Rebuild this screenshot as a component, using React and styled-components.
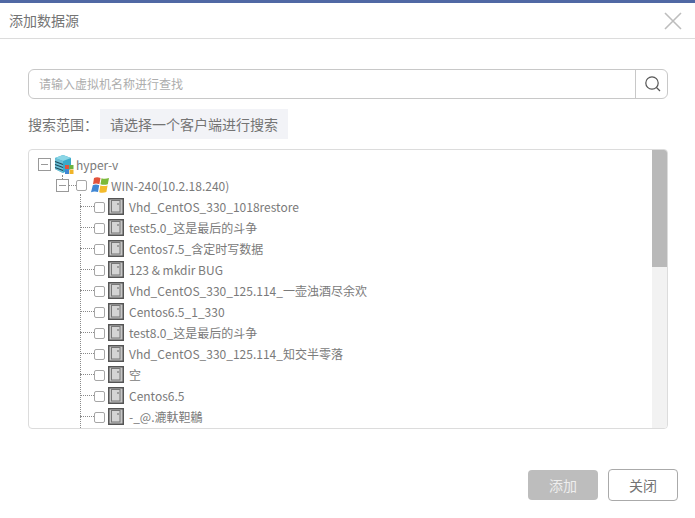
import React from "react";
import styled, { createGlobalStyle } from "styled-components";

const Global = createGlobalStyle`
  html, body { margin: 0; padding: 0; background: #fff; }
  body { font-family: "Noto Sans CJK SC", "Noto Sans", sans-serif; color: #666; }
  * { box-sizing: border-box; }
`;
const Dialog = styled.div`
  width: 695px; height: 518px; border-top: 3px solid #5068a4; background: #fff;
  display: flex; flex-direction: column; overflow: hidden;
`;
const Header = styled.header`
  height: 36px; flex: none; border-bottom: 1px solid #dcdcdc;
  display: flex; align-items: center; justify-content: space-between; padding: 0 13px 2px 9px;
`;
const Title = styled.h1`
  margin: 0; font-size: 14px; font-weight: 400; color: #747474; line-height: 20px;
  font-family: "Noto Sans CJK SC", sans-serif;
`;
const CloseBtn = styled.button`
  width: 18px; height: 18px; padding: 0; border: 0; background: none; display: block; margin-top: 2px;
`;
const Body = styled.main`
  flex: 1; padding: 30px 27px 0 28px; display: flex; flex-direction: column;
`;
const SearchBox = styled.div`
  height: 30px; border: 1px solid #c8c8c8; border-radius: 6px; display: flex; align-items: stretch;
`;
const SearchInput = styled.input`
  flex: 1; min-width: 0; border: 0; outline: 0; background: none; padding: 0 10px 2px;
  font: 12px "Noto Sans CJK SC", sans-serif; color: #666;
  &::placeholder { color: #adadad; opacity: 1; }
`;
const SearchBtn = styled.button`
  width: 32px; flex: none; border: 0; border-left: 1px solid #c8c8c8; background: none; padding: 0 0 0 2px;
  display: flex; align-items: center; justify-content: center;
`;
const ScopeRow = styled.div`
  display: flex; align-items: center; height: 30px; margin-top: 10px;
`;
const ScopeLabel = styled.span`
  width: 72px; font: 14px/20px "Noto Sans CJK SC", sans-serif; color: #747474;
`;
const ScopeChip = styled.span`
  height: 30px; width: 188px; background: #f2f3f7; color: #747474; text-align: center;
  font: 14px/30px "Noto Sans CJK SC", sans-serif;
`;
const TreePanel = styled.section`
  height: 280px; margin-top: 10px; border: 1px solid #dcdcdc; border-radius: 4px;
  display: flex; overflow: hidden;
`;
const Tree = styled.div`
  flex: 1; min-width: 0; padding: 4px 0 0 9px; position: relative; overflow: hidden;
`;
const Row = styled.div`
  height: 21px; display: flex; align-items: center; padding-left: ${p => p.$indent}px;
`;
const Expander = styled.span`
  width: 13px; height: 13px; flex: none; border: 1px solid #999; background: #fff; position: relative;
  &::after { content: ""; position: absolute; left: 2px; right: 2px; top: 5px; height: 1px; background: #999; }
`;
const Check = styled.span`
  width: 11px; height: 11px; flex: none; border: 1px solid #a6a6a6; border-radius: 2px; background: #fff;
  margin-top: ${p => p.$nudge ? 2 : 0}px;
`;
const HDots = styled.span`
  width: ${p => p.$w}px; height: 1px; flex: none; border-top: 1px dotted #8a8a8a;
`;
const VLine = styled.span`
  position: absolute; width: 1px; border-left: 1px dotted #8a8a8a;
  left: ${p => p.$left}px; top: ${p => p.$top}px; height: ${p => p.$h}px;
`;
const Label = styled.span`
  font-size: 12px; line-height: 21px; color: #7a7a7a; white-space: nowrap; margin-left: ${p => p.$ml}px;
  font-family: "Noto Sans CJK SC", "Noto Sans", sans-serif;
`;
const IconSlot = styled.span`
  display: flex; flex: none; margin-left: ${p => p.$ml}px;
`;
const Scrollbar = styled.div`
  width: 15px; flex: none; background: #f2f2f2;
`;
const Thumb = styled.div`
  height: 117px; background: #b9b9b9;
`;
const Footer = styled.footer`
  height: 78px; flex: none; padding: 0 17px 17px 0; display: flex; justify-content: flex-end; align-items: flex-end; gap: 10px;
`;
const Btn = styled.button`
  width: 70px; padding: 0; font: 14px "Noto Sans CJK SC", sans-serif; border-radius: 4px;
  height: ${p => p.$primary ? 30 : 32}px;
  margin-bottom: ${p => p.$primary ? 1 : 0}px;
  border: ${p => p.$primary ? "0" : "1px solid #aaa"};
  background: ${p => p.$primary ? "#bdbdbd" : "#fff"};
  color: ${p => p.$primary ? "#eee" : "#747474"};
`;

const ServerIcon = () => (
  <svg width="20" height="20" viewBox="0 0 20 20">
    <path d="M1 3 L9 0 L17 3 V14 L9 18 L1 14Z" fill="#3aa9c8" />
    <path d="M1 3 L9 0 L17 3 L9 6Z" fill="#8bd6e6" />
    <path d="M1 3 L9 6 V18 L1 14Z" fill="#6cc0d6" />
    <path d="M1 6.5 L9 9.5 M1 9.5 L9 12.5 M1 12.5 L9 15.5" stroke="#1d4a5c" strokeWidth="1.1" />
    <rect x="11" y="10" width="4" height="4" fill="#e2533c" />
    <rect x="15.5" y="10" width="4" height="4" fill="#6db33f" />
    <rect x="11" y="14.5" width="4" height="4.5" fill="#3f86d4" />
    <rect x="15.5" y="14.5" width="4" height="4.5" fill="#f0b429" />
  </svg>
);
const WinIcon = () => (
  <svg width="20" height="17" viewBox="0 0 20 17">
    <path d="M4 1 Q7 -0.5 10.5 1 L9.4 7.2 Q6 6 3 7.2Z" fill="#e2533c" />
    <path d="M11.5 1.2 Q15 2.5 19 1 L17.8 7.3 Q14 8.3 10.5 7.3Z" fill="#7cb93a" />
    <path d="M2.8 8.2 Q6 7 9.2 8.3 L8 15 Q4.5 13.8 1 15.2Z" fill="#3f86d4" />
    <path d="M10.3 8.4 Q14 9.4 17.6 8.4 L16.4 15 Q12.5 16.4 9.2 15.2Z" fill="#f4bb2c" />
  </svg>
);
const VmIcon = () => (
  <svg width="16" height="17" viewBox="0 0 16 17">
    <rect x="0.75" y="0.75" width="14.5" height="15.5" fill="#c6c6c6" stroke="#555" strokeWidth="1.5" />
    <rect x="3.5" y="2.5" width="8.5" height="11.5" fill="#d4d4d4" stroke="#777" />
    <rect x="9.5" y="5" width="1" height="2" fill="#666" />
  </svg>
);

const vms = [
  "Vhd_CentOS_330_1018restore",
  "test5.0_这是最后的斗争",
  "Centos7.5_含定时写数据",
  "123 & mkdir BUG",
  "Vhd_CentOS_330_125.114_一壶浊酒尽余欢",
  "Centos6.5_1_330",
  "test8.0_这是最后的斗争",
  "Vhd_CentOS_330_125.114_知交半零落",
  "空",
  "Centos6.5",
  "-_@.漉軑靼鶒",
];

export default function App() {
  return (
    <>
      <Global />
      <Dialog>
        <Header>
          <Title>添加数据源</Title>
          <CloseBtn aria-label="close">
            <svg width="18" height="18" viewBox="0 0 18 18">
              <path d="M1 1 L17 17 M17 1 L1 17" stroke="#bdbdbd" strokeWidth="1.6" />
            </svg>
          </CloseBtn>
        </Header>
        <Body>
          <SearchBox>
            <SearchInput placeholder="请输入虚拟机名称进行查找" />
            <SearchBtn aria-label="search">
              <svg width="18" height="18" viewBox="0 0 18 18" fill="none" stroke="#555" strokeWidth="1.2">
                <circle cx="8" cy="8" r="6.2" />
                <path d="M12.5 12.5 L16 16" />
              </svg>
            </SearchBtn>
          </SearchBox>
          <ScopeRow>
            <ScopeLabel>搜索范围：</ScopeLabel>
            <ScopeChip>请选择一个客户端进行搜索</ScopeChip>
          </ScopeRow>
          <TreePanel>
            <Tree>
              <VLine $left={33} $top={25} $h={6} />
              <VLine $left={51} $top={44} $h={240} />
              <Row $indent={0}>
                <Expander />
                <IconSlot $ml={3}><ServerIcon /></IconSlot>
                <Label $ml={2}>hyper-v</Label>
              </Row>
              <Row $indent={18}>
                <Expander />
                <HDots $w={7} />
                <Check />
                <IconSlot $ml={3}><WinIcon /></IconSlot>
                <Label $ml={1}>WIN-240(10.2.18.240)</Label>
              </Row>
              {vms.map(v => (
                <Row key={v} $indent={42}>
                  <HDots $w={14} />
                  <Check $nudge />
                  <IconSlot $ml={3}><VmIcon /></IconSlot>
                  <Label $ml={5}>{v}</Label>
                </Row>
              ))}
            </Tree>
            <Scrollbar><Thumb /></Scrollbar>
          </TreePanel>
        </Body>
        <Footer>
          <Btn $primary>添加</Btn>
          <Btn>关闭</Btn>
        </Footer>
      </Dialog>
    </>
  );
}
